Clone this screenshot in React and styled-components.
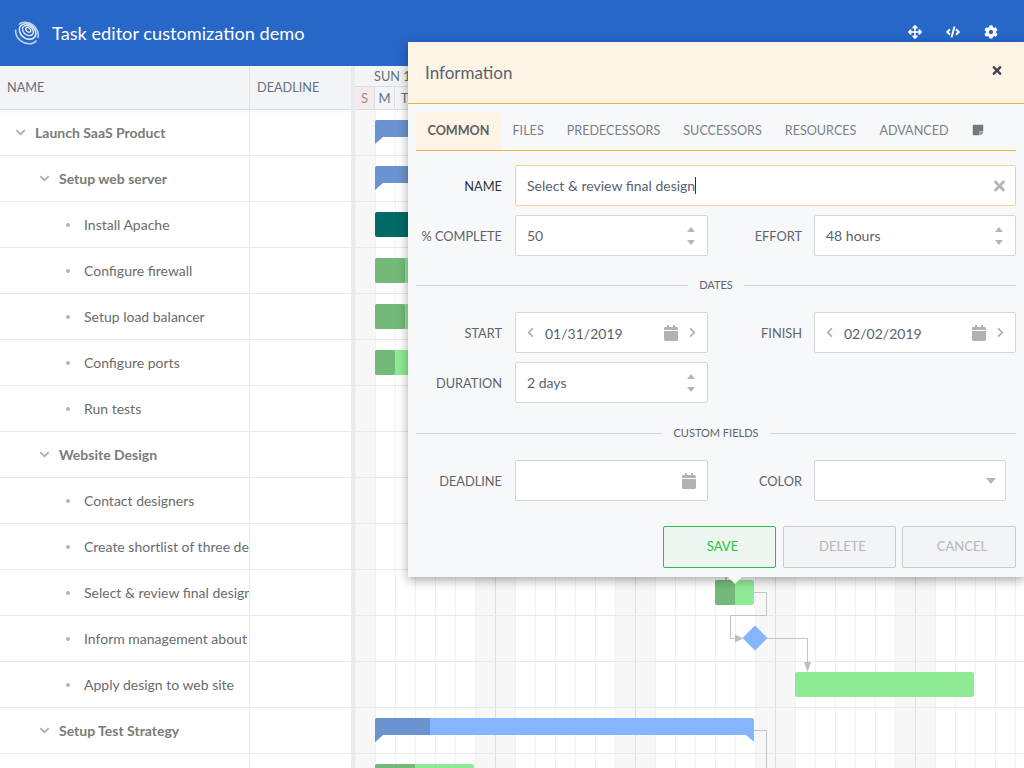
import React from 'react';
import styled, { createGlobalStyle } from 'styled-components';
import {
  FaArrowsAlt,
  FaCalendar,
  FaChevronDown,
  FaChevronLeft,
  FaChevronRight,
  FaCode,
  FaCog,
  FaStickyNote,
  FaTimes,
} from 'react-icons/fa';

const GlobalStyle = createGlobalStyle`
  html, body {
    margin: 0;
    padding: 0;
    height: 100%;
    overflow: hidden;
    background: #fff;
    font-family: Lato, "Open Sans", sans-serif;
  }
  * { box-sizing: border-box; }
`;

const Page = styled.div`
  position: relative;
  width: 1024px;
  height: 768px;
  overflow: hidden;
`;

const TopBar = styled.header`
  display: flex;
  align-items: center;
  height: 66px;
  padding: 0 26px 0 14px;
  background: #2767c8;
  color: #fff;
`;

const Title = styled.h1`
  flex: 1;
  margin: 0 0 0 12px;
  font-size: 18.2px;
  font-weight: 400;
`;

const TopIcons = styled.div`
  display: flex;
  align-items: center;
  gap: 24px;
  margin-top: -2px;
  font-size: 14px;
  & > svg { display: block; }
`;

const Main = styled.div`
  display: flex;
  height: 702px;
`;

const Grid = styled.div`
  flex: 0 0 351px;
  overflow: hidden;
`;

const GridHead = styled.div`
  display: flex;
  height: 44px;
  background: #f3f4f6;
  border-bottom: 1px solid #dcdde0;
  box-shadow: 0 2px 4px rgba(0, 0, 0, 0.04);
`;

const HeadCell = styled.div`
  flex: 0 0 ${(p) => p.$width}px;
  display: flex;
  align-items: center;
  padding: 0 0 2px 7px;
  font-size: 12.7px;
  color: #66707c;
  border-right: 1px solid #e0e1e4;
  &:last-child { border-right: 0; }
`;

const Row = styled.div`
  display: flex;
  height: 46px;
  border-bottom: 1px solid #e9e9eb;
`;

const NameCell = styled.div`
  flex: 0 0 250px;
  display: flex;
  align-items: center;
  padding-left: ${(p) => p.$indent}px;
  font-size: 14px;
  font-weight: ${(p) => (p.$parent ? 700 : 400)};
  color: ${(p) => (p.$parent ? '#7b7b7b' : '#6b6b6b')};
  white-space: nowrap;
  overflow: hidden;
  border-right: 1px solid #e9e9eb;
`;

const Toggle = styled(FaChevronDown)`
  flex: none;
  width: 11px;
  height: 11px;
  margin-right: 9px;
  color: #aeaeae;
`;

const Dot = styled.span`
  flex: none;
  width: 4px;
  height: 4px;
  margin-right: 14px;
  border-radius: 50%;
  background: #b4b4b4;
`;

const Splitter = styled.div`
  flex: 0 0 4px;
  background: #e9eaed;
`;

const Timeline = styled.div`
  flex: 1;
  overflow: hidden;
`;

const TimeHead = styled.div`
  height: 44px;
  background: #f3f4f6;
  border-bottom: 1px solid #dcdde0;
`;

const WeekRow = styled.div`
  height: 21px;
  padding-left: 19px;
  border-bottom: 1px solid #dcdde0;
  font-size: 12.7px;
  line-height: 21px;
  color: #66707c;
  white-space: nowrap;
`;

const DayRow = styled.div`
  display: flex;
  height: 22px;
`;

const Day = styled.div`
  flex: 0 0 20px;
  text-align: center;
  font-size: 13px;
  line-height: 22px;
  color: ${(p) => (p.$off ? '#9a8f8f' : '#66707c')};
  background: ${(p) => (p.$off ? '#f6eaea' : 'transparent')};
  border-right: 1px solid #dcdde0;
`;

const Chart = styled.svg`
  display: block;
`;

const Dialog = styled.section`
  position: absolute;
  left: 408px;
  top: 42px;
  width: 616px;
  height: 535px;
  background: #f7f8fa;
  box-shadow: 0 3px 10px rgba(0, 0, 0, 0.35);
  &::after {
    content: '';
    position: absolute;
    left: 320px;
    bottom: -7px;
    border-left: 7px solid transparent;
    border-right: 7px solid transparent;
    border-top: 7px solid #f7f8fa;
  }
`;

const DialogHead = styled.div`
  display: flex;
  align-items: center;
  justify-content: space-between;
  height: 62px;
  padding: 0 21px 0 17px;
  background: #fef4e6;
  border-bottom: 1px solid #f6b042;
  font-size: 17px;
  color: #59626e;
`;

const CloseIcon = styled(FaTimes)`
  width: 12px;
  height: 13px;
  margin-top: -4px;
  color: #3c4652;
`;

const DialogBody = styled.div`
  padding: 8px 8px 0;
`;

const Tabs = styled.div`
  display: flex;
  align-items: center;
  height: 39px;
  border-bottom: 1px solid #f6b042;
`;

const Tab = styled.div`
  display: flex;
  align-items: center;
  height: 38px;
  padding: 0 11.5px 2px;
  font-size: 12.6px;
  font-weight: ${(p) => (p.$active ? 700 : 400)};
  color: ${(p) => (p.$active ? '#5f5f5f' : '#7b7f85')};
  background: ${(p) => (p.$active ? '#fef4e6' : 'transparent')};
`;

const NoteIcon = styled(FaStickyNote)`
  width: 12px;
  height: 12px;
  color: #777;
`;

const Form = styled.div`
  display: grid;
  grid-template-columns: 87px 193px 82px 202px;
  grid-auto-rows: 41px;
  column-gap: 12px;
  row-gap: ${(p) => p.$gap}px;
  margin-top: ${(p) => p.$top}px;
  align-items: center;
`;

const Label = styled.label`
  padding-right: ${(p) => (p.$second ? 0 : 1)}px;
  text-align: right;
  font-size: 12.8px;
  color: ${(p) => (p.$focus ? '#2e3238' : '#5f636a')};
`;

const Field = styled.div`
  display: flex;
  align-items: center;
  grid-column: ${(p) => (p.$wide ? '2 / -1' : 'auto')};
  height: 41px;
  width: ${(p) => (p.$short ? '192px' : 'auto')};
  padding: 0 ${(p) => (p.$pad ? 9 : 11)}px;
  background: #fff;
  border: 1px solid ${(p) => (p.$focus ? '#f8cf8f' : '#d5d6d9')};
  border-radius: 2px;
  font-size: 14px;
  color: #59626e;
`;

const Value = styled.span`
  flex: 1;
  white-space: nowrap;
`;

const Caret = styled.span`
  display: inline-block;
  width: 1px;
  height: 17px;
  margin-bottom: -3px;
  background: #333;
`;

const ClearIcon = styled(FaTimes)`
  width: 15px;
  height: 16px;
  margin-right: -3px;
  color: #b5b5b5;
`;

const Spin = styled.div`
  display: flex;
  flex-direction: column;
  gap: 8px;
  margin-right: 1px;
`;

const SpinArrow = styled.span`
  width: 0;
  height: 0;
  border-left: 4.5px solid transparent;
  border-right: 4.5px solid transparent;
  border-${(p) => (p.$down ? 'top' : 'bottom')}: 5px solid #b5b5b5;
`;

const DropArrow = styled.span`
  width: 0;
  height: 0;
  margin-right: -2px;
  border-left: 5.5px solid transparent;
  border-right: 5.5px solid transparent;
  border-top: 6px solid #b5b5b5;
`;

const Nav = styled.span`
  display: flex;
  color: #b0b0b0;
  font-size: 11px;
`;

const DateValue = styled(Value)`
  margin-left: 9px;
  padding-top: 1px;
`;

const Calendar = styled(FaCalendar)`
  flex: none;
  width: 14px;
  height: 16px;
  color: #b2b2b2;
  margin-right: ${(p) => (p.$end ? 0 : 9)}px;
`;

const Section = styled.div`
  display: flex;
  align-items: center;
  gap: 11px;
  margin-top: ${(p) => p.$top}px;
  font-size: 11px;
  line-height: 14px;
  color: #5f636a;
  &::before, &::after {
    content: '';
    flex: 1;
    height: 1px;
    background: #d3d4d8;
  }
`;

const Buttons = styled.div`
  display: flex;
  justify-content: flex-end;
  gap: 6px;
  margin-top: 25px;
`;

const Button = styled.button`
  width: ${(p) => p.$width || 113}px;
  height: 42px;
  margin-right: ${(p) => (p.$save ? 1 : 0)}px;
  padding: 0 0 2px 6px;
  font-family: inherit;
  font-size: 13px;
  border-radius: 2px;
  border: 1px solid ${(p) => (p.$save ? '#2fb84c' : '#c9cbce')};
  background: ${(p) => (p.$save ? '#edf6f0' : '#f3f4f6')};
  color: ${(p) => (p.$save ? '#20c63a' : '#b4b6b8')};
`;

const tasks = [
  ['Launch SaaS Product', 0],
  ['Setup web server', 1],
  ['Install Apache', 2],
  ['Configure firewall', 2],
  ['Setup load balancer', 2],
  ['Configure ports', 2],
  ['Run tests', 2],
  ['Website Design', 1],
  ['Contact designers', 2],
  ['Create shortlist of three designers', 2],
  ['Select & review final design', 2],
  ['Inform management about decision', 2],
  ['Apply design to web site', 2],
  ['Setup Test Strategy', 1],
  ['Hire QA staff', 2],
];

const indents = [15, 39, 66];
const tabNames = ['Common', 'Files', 'Predecessors', 'Successors', 'Resources', 'Advanced'];
const days = ['S', 'M', 'T', 'W', 'T', 'F', 'S'];

const Logo = () => (
  <svg width="26" height="26" viewBox="0 0 26 26" fill="none" stroke="#fff">
    <g transform="rotate(38 13 13)">
      <ellipse cx="13" cy="13" rx="12" ry="10" strokeWidth="1.6" opacity="0.7" strokeDasharray="30 6" />
      <ellipse cx="12.6" cy="11.5" rx="9" ry="7" strokeWidth="1.6" opacity="0.85" />
      <ellipse cx="12.2" cy="10.5" rx="6" ry="4.4" strokeWidth="1.4" opacity="0.85" />
      <ellipse cx="12" cy="9.8" rx="2.8" ry="1.9" strokeWidth="1.2" />
    </g>
  </svg>
);

// task bars, in page pixels so they read off the screenshot directly
const GanttChart = () => {
  const columns = [];
  for (let x = 355; x < 1024; x += 20) columns.push(x);
  const shaded = [355, 475, 495, 615, 635, 755, 775, 895, 915];

  return (
    <Chart width="669" height="658" viewBox="355 110 669 658">
      {shaded.map((x) => <rect key={x} x={x} y="110" width="20" height="658" fill="#f7f7f7" />)}
      {columns.map((x) => (
        <rect
          key={x}
          x={x}
          y="110"
          width="1"
          height="658"
          fill={(x - 355) % 140 === 0 && x > 355 ? '#dedede' : '#f1f1f1'}
        />
      ))}
      {tasks.map((t, i) => <rect key={t[0]} x="355" y={155 + i * 46} width="669" height="1" fill="#e9e9eb" />)}

      <path d="M375 122a2 2 0 0 1 2-2H420V137H383L375 144Z" fill="#6b93cf" />
      <path d="M375 168a2 2 0 0 1 2-2H420V183H383L375 190Z" fill="#6b93cf" />
      <rect x="375" y="212" width="45" height="25" rx="2" fill="#006a66" />
      <rect x="375" y="258" width="45" height="25" rx="2" fill="#8eea94" />
      <rect x="375" y="258" width="30" height="25" rx="2" fill="#73ba7a" />
      <rect x="375" y="304" width="45" height="25" rx="2" fill="#8eea94" />
      <rect x="375" y="304" width="30" height="25" rx="2" fill="#73ba7a" />
      <rect x="375" y="350" width="45" height="25" rx="2" fill="#8eea94" />
      <rect x="375" y="350" width="20" height="25" rx="2" fill="#73ba7a" />

      <g fill="none" stroke="#c4c4c4" strokeWidth="1">
        <path d="M754 592.5H766.5V615.5H730.5V638.5H738" />
        <path d="M767 638.5H807.5V664" />
        <path d="M754 730.5H766.5V768" />
        <path d="M726 577V580" stroke="#888" />
      </g>
      <path d="M735 634.5L743 638.5L735 642.5Z" fill="#bdbdbd" />
      <path d="M804 662L807.5 672L811 662Z" fill="#bdbdbd" />

      <rect x="715" y="580" width="39" height="25" rx="2" fill="#8eea94" />
      <path d="M717 580H735V605H717a2 2 0 0 1-2-2V582a2 2 0 0 1 2-2Z" fill="#73ba7a" />
      <path d="M755 625.5L767.5 638L755 650.5L742.5 638Z" fill="#84b5fe" />
      <rect x="795" y="672" width="179" height="25" rx="2" fill="#8eea94" />
      <path d="M377 718H752a2 2 0 0 1 2 2V742L746 735H383L375 742V720a2 2 0 0 1 2-2Z" fill="#84b5fe" />
      <path d="M377 718H430V735H383L375 742V720a2 2 0 0 1 2-2Z" fill="#6b93cf" />
      <rect x="375" y="764" width="99" height="10" rx="2" fill="#8eea94" />
      <path d="M377 764H415V774H375V766a2 2 0 0 1 2-2Z" fill="#73ba7a" />
    </Chart>
  );
};

const Spinner = () => (
  <Spin>
    <SpinArrow />
    <SpinArrow $down />
  </Spin>
);

const DateField = ({ value }) => (
  <Field $pad>
    <Nav><FaChevronLeft /></Nav>
    <DateValue>{value}</DateValue>
    <Calendar />
    <Nav><FaChevronRight /></Nav>
  </Field>
);

const App = () => (
  <Page>
    <GlobalStyle />
    <TopBar>
      <Logo />
      <Title>Task editor customization demo</Title>
      <TopIcons>
        <FaArrowsAlt />
        <FaCode />
        <FaCog />
      </TopIcons>
    </TopBar>

    <Main>
      <Grid>
        <GridHead>
          <HeadCell $width={250}>NAME</HeadCell>
          <HeadCell $width={101}>DEADLINE</HeadCell>
        </GridHead>
        {tasks.map(([name, level]) => (
          <Row key={name}>
            <NameCell $indent={indents[level]} $parent={level < 2}>
              {level < 2 ? <Toggle /> : <Dot />}
              {name}
            </NameCell>
          </Row>
        ))}
      </Grid>
      <Splitter />
      <Timeline>
        <TimeHead>
          <WeekRow>SUN 13 JAN 2019</WeekRow>
          <DayRow>
            {days.map((d, i) => <Day key={i} $off={i === 0 || i === 6}>{d}</Day>)}
          </DayRow>
        </TimeHead>
        <GanttChart />
      </Timeline>
    </Main>

    <Dialog>
      <DialogHead>
        Information
        <CloseIcon />
      </DialogHead>
      <DialogBody>
        <Tabs>
          {tabNames.map((t, i) => <Tab key={t} $active={i === 0}>{t.toUpperCase()}</Tab>)}
          <Tab><NoteIcon /></Tab>
        </Tabs>

        <Form $top={14} $gap={9}>
          <Label $focus>NAME</Label>
          <Field $wide $focus>
            <Value>Select &amp; review final design<Caret /></Value>
            <ClearIcon />
          </Field>
          <Label>% COMPLETE</Label>
          <Field><Value>50</Value><Spinner /></Field>
          <Label $second>EFFORT</Label>
          <Field><Value>48 hours</Value><Spinner /></Field>
        </Form>

        <Section $top={22}>DATES</Section>

        <Form $top={20} $gap={9}>
          <Label>START</Label>
          <DateField value="01/31/2019" />
          <Label $second>FINISH</Label>
          <DateField value="02/02/2019" />
          <Label>DURATION</Label>
          <Field><Value>2 days</Value><Spinner /></Field>
        </Form>

        <Section $top={23}>CUSTOM FIELDS</Section>

        <Form $top={20} $gap={0}>
          <Label>DEADLINE</Label>
          <Field><Value /><Calendar $end /></Field>
          <Label $second>COLOR</Label>
          <Field $short>
            <Value />
            <DropArrow />
          </Field>
        </Form>

        <Buttons>
          <Button $save>SAVE</Button>
          <Button>DELETE</Button>
          <Button $width={114}>CANCEL</Button>
        </Buttons>
      </DialogBody>
    </Dialog>
  </Page>
);

export default App;
